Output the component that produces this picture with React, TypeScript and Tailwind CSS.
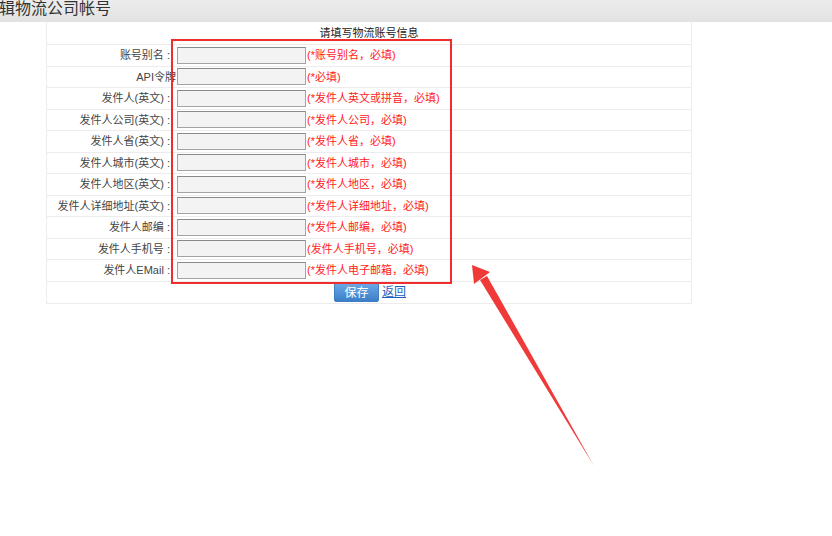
import React from "react";

type Field = {
  label: string;
  hint: string;
  tight?: boolean;
};

const fields: Field[] = [
  { label: "账号别名 :", hint: "(*账号别名，必填)" },
  { label: "API令牌", hint: "(*必填)", tight: true },
  { label: "发件人(英文) :", hint: "(*发件人英文或拼音，必填)" },
  { label: "发件人公司(英文) :", hint: "(*发件人公司，必填)" },
  { label: "发件人省(英文) :", hint: "(*发件人省，必填)" },
  { label: "发件人城市(英文) :", hint: "(*发件人城市，必填)" },
  { label: "发件人地区(英文) :", hint: "(*发件人地区，必填)" },
  { label: "发件人详细地址(英文) :", hint: "(*发件人详细地址，必填)" },
  { label: "发件人邮编 :", hint: "(*发件人邮编，必填)" },
  { label: "发件人手机号 :", hint: "(发件人手机号，必填)" },
  { label: "发件人EMail :", hint: "(*发件人电子邮箱，必填)" },
];

const font = { fontFamily: '"Liberation Sans", "Noto Sans CJK SC", sans-serif' };

export default function App() {
  return (
    <div className="relative w-[832px] h-[536px] bg-white overflow-hidden text-[#333]" style={font}>
      {/* Title bar */}
      <div className="h-[22px] bg-gradient-to-b from-[#ececec] to-[#e2e2e2] overflow-hidden">
        <h1 className="text-[16px] leading-[18px] -ml-[1px] text-[#333] font-normal whitespace-nowrap">
          辑物流公司帐号
        </h1>
      </div>

      {/* Form table */}
      <div className="ml-[46px] w-[646px] border-l border-r border-[#ececec]">
        <div className="h-[23px] flex items-center justify-center border-b border-[#ececec] text-[11px] text-[#222]">
          请填写物流账号信息
        </div>
        {fields.map((f) => (
          <div key={f.label} className="h-[21.5px] flex items-center border-b border-[#ececec] text-[11px]">
            <div
              className={
                f.tight
                  ? "w-[129px] shrink-0 text-right whitespace-nowrap text-[#444]"
                  : "w-[123px] shrink-0 mr-[6px] text-right whitespace-nowrap text-[#444]"
              }
            >
              {f.label}
            </div>
            <div className="flex items-center pl-[1px]">
              <input
                type="text"
                className="w-[129px] h-[17px] bg-[#f3f3f3] border border-[#a3a3a3] border-t-[#8a8a8a] outline-none"
              />
              <span className="ml-[1px] text-[#ff1a1a] whitespace-nowrap">{f.hint}</span>
            </div>
          </div>
        ))}
        <div className="h-[22px] flex items-center justify-center border-b border-[#ececec] text-[11px]">
          <button className="w-[45px] h-[19px] mt-[1px] ml-[2px] rounded-[2px] border border-[#3f7fc0] bg-gradient-to-b from-[#6aa8e6] to-[#3b7fc9] text-white text-[12px] leading-none">
            保存
          </button>
          <a href="#" className="ml-[3px] text-[#1a5fc0] underline text-[12px]">
            返回
          </a>
        </div>
      </div>

      {/* Annotation: red box */}
      <div className="absolute left-[171px] top-[39px] w-[281px] h-[245px] border-2 border-[#ee2e2e] pointer-events-none" />

      {/* Annotation: arrow */}
      <svg className="absolute left-0 top-0 pointer-events-none" width="832" height="536">
        <polygon points="594,466 480,280 487,276" fill="#f03a3a" />
        <polygon points="472,265 474,284 490,272" fill="#f03a3a" />
      </svg>
    </div>
  );
}
